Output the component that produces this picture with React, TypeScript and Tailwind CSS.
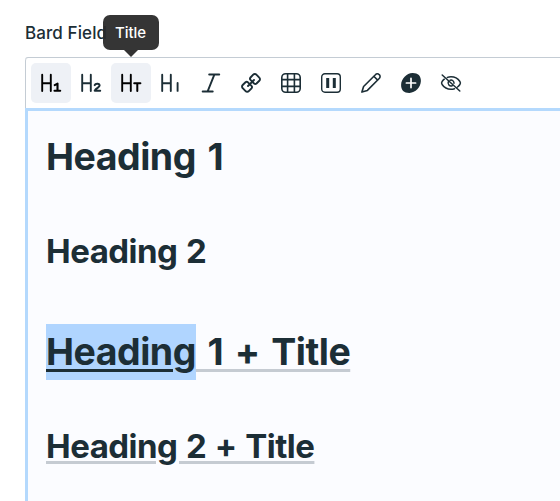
import React from 'react';
import { clsx } from 'clsx';

interface ToolButtonProps {
  label: string;
  active?: boolean;
  tooltip?: boolean;
  children: React.ReactNode;
}

function ToolButton({ label, active, tooltip, children }: ToolButtonProps) {
  return (
    <button
      type="button"
      aria-label={label}
      className={clsx(
        'relative flex h-10 w-10 items-center justify-center rounded-[5px]',
        active ? 'bg-[#eef1f6] text-black' : 'text-[#1c2e36]'
      )}
    >
      <svg
        className="h-5 w-5 overflow-visible"
        viewBox="0 0 20 20"
        fill="none"
        stroke="currentColor"
        strokeWidth={1.6}
        strokeLinecap="round"
        strokeLinejoin="round"
      >
        {children}
      </svg>
      {tooltip && (
        <span className="absolute bottom-[53px] left-[19.5px] flex h-[35px] w-14 -translate-x-1/2 items-center justify-center rounded-[7px] bg-[#2a2a2a]/95 text-[15px] leading-none font-medium tracking-[-0.1px] text-white">
          {label}
          <span className="absolute top-full left-1/2 -translate-x-1/2 border-x-[7px] border-t-[7px] border-x-transparent border-t-[#333]" />
        </span>
      )}
    </button>
  );
}

const headingBar = <path d="M1.2 1.7v16.4M9.8 1.7v16.4M1.2 10.3h8.6" strokeWidth={1.9} />;

export default function App() {
  return (
    <div className="h-[501px] overflow-hidden bg-white pt-[22px] pl-[25px] font-['Inter',sans-serif] text-[#1c2e36]">
      <label className="block h-[35px] text-[17px] leading-[22px] font-medium tracking-[0.1px]">Bard Field</label>
      <div className="flex h-[444px] flex-col rounded-tl-[3px] border-t border-[#c4ccd4]">
        <div className="flex h-[50px] shrink-0 rounded-tl-[3px] border-l border-[#c4ccd4] pt-[5px] pl-[5px]">
          <ToolButton label="Heading 1" active>
            {headingBar}
            <path d="M13.7 12.1l2.8-1.5v7.1M13.5 17.8h5.7" strokeWidth={2.1} />
          </ToolButton>
          <ToolButton label="Heading 2">
            {headingBar}
            <path d="M13.7 12.1c.7-1.8 4.9-1.9 4.9.5 0 1.9-3.4 2.4-4.9 5.1h5.5" strokeWidth={2} />
          </ToolButton>
          <ToolButton label="Title" active tooltip>
            {headingBar}
            <path d="M13.2 10.2h6.2M16.3 10.2v7.7" strokeWidth={2} />
          </ToolButton>
          <ToolButton label="Intro">
            {headingBar}
            <path d="M16.6 10v7.9" strokeWidth={1.9} />
          </ToolButton>
          <ToolButton label="Italic">
            <path d="M8.2 1.5h10M1.7 18.5h10M13.4 1.5L6.6 18.5" strokeWidth={2} />
          </ToolButton>
          <ToolButton label="Link">
            <path
              d="M8.7 11.1L6.9 9.3a1.8 1.8 0 0 0-2.4 0L1.7 12a2.2 2.2 0 0 0 0 3.2l2.9 2.9a2.2 2.2 0 0 0 3.2 0l2.7-2.8a1.8 1.8 0 0 0 0-2.4L8.7 11.1M11.3 8.7L9.5 6.9a1.8 1.8 0 0 1 0-2.4l2.7-2.8a2.2 2.2 0 0 1 3.2 0l2.9 2.9a2.2 2.2 0 0 1 0 3.2l-2.8 2.7a1.8 1.8 0 0 1-2.4 0zM7 13L13 7"
              strokeWidth={1.9}
            />
          </ToolButton>
          <ToolButton label="Table">
            <rect x="0.8" y="0.8" width="18.4" height="18.4" rx="3.8" />
            <path d="M6.6 .8v18.4M13.4 .8v18.4M.8 6.6h18.4M.8 13.4h18.4" />
          </ToolButton>
          <ToolButton label="Embed">
            <rect x="0.7" y="0.7" width="18.6" height="18.6" rx="3.2" strokeWidth={1.4} />
            <path d="M6.7 4.9v10.2M13.3 4.9v10.2" strokeWidth={3} strokeLinecap="butt" />
          </ToolButton>
          <ToolButton label="Edit">
            <path
              d="M.9 19.1l1.7-5.6L14.4 1.7a2.5 2.5 0 0 1 3.8 0 2.5 2.5 0 0 1 0 3.8L6.4 17.4zM12.8 3.3L16.7 7.1"
              strokeWidth={1.6}
            />
          </ToolButton>
          <ToolButton label="Add">
            <path
              d="M11.5.1C17 0 20 3 19.9 8.1 19.7 14.2 14.4 19.8 8.5 19.9 3 20 0 17 .1 11.9.3 5.8 5.6.2 11.5.1z"
              fill="currentColor"
              stroke="none"
            />
            <path d="M10 5.4v9.2M5.4 10h9.2" stroke="white" strokeWidth={1.7} />
          </ToolButton>
          <ToolButton label="Hide">
            <path
              d="M1.2 2l17.6 16M6.4 4.4C7.5 4 8.7 3.8 10 3.8c4.2 0 7.2 2.2 8.9 4.7.7 1 .7 2 0 3-.6.9-1.4 1.8-2.4 2.5M13.5 15.7c-1.1.4-2.3.6-3.5.6-4.2 0-7.2-2.2-8.9-4.8-.7-1-.7-2 0-3 .6-.8 1.3-1.6 2.2-2.3M9.2 7.2a3 3 0 0 1 3.8 3.1M7.4 8.6a3 3 0 0 0 3.8 4.1"
              strokeWidth={1.5}
            />
          </ToolButton>
        </div>
        <div className="flex-1 border-t-[3px] border-l-[3px] border-[#b4d9fd] bg-[#fbfcff] pl-[18px] font-bold">
          <h1 className="mt-[18px] h-14 text-[37.5px] leading-[55px] tracking-[-0.5px] whitespace-nowrap [word-spacing:3.2px]">Heading 1</h1>
          <h2 className="mt-[42px] h-12 text-[33px] leading-12 tracking-[-0.5px] whitespace-nowrap [word-spacing:1.2px]">Heading 2</h2>
          <h1 className="mt-[49px] h-14 text-[37.5px] leading-[55px] tracking-[-0.5px] whitespace-nowrap underline decoration-[#c5cbd2] decoration-[3px] underline-offset-[4px] [word-spacing:3.2px]">
            <span className="inline-block bg-[#b0d5ff] pb-px underline decoration-[#1c2e36] decoration-[3px] underline-offset-[4px]">Heading</span> 1 + Title
          </h1>
          <h2 className="mt-[42px] h-12 text-[33px] leading-12 tracking-[-0.5px] whitespace-nowrap underline decoration-[#c5cbd2] decoration-[3px] underline-offset-[3px] [word-spacing:1.2px]">Heading 2 + Title</h2>
        </div>
      </div>
    </div>
  );
}
